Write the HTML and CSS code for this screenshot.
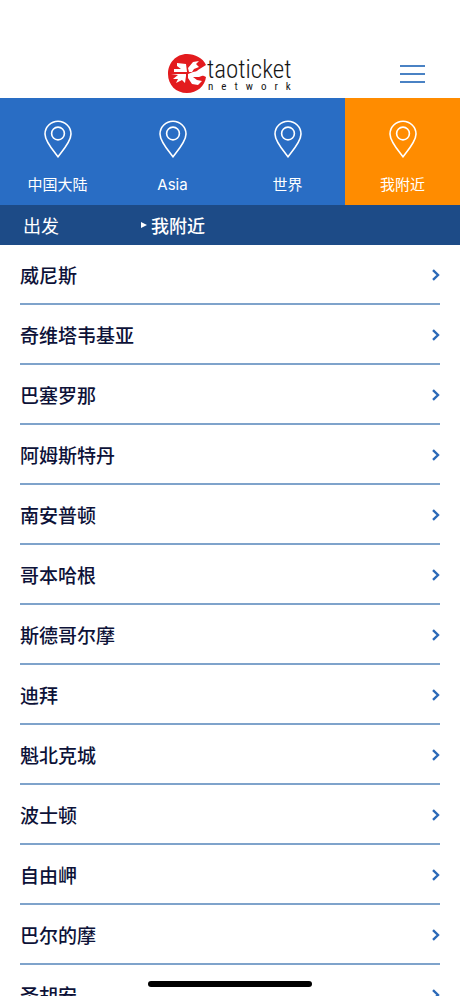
FILE: index.html
```html
<!DOCTYPE html>
<html lang="zh-CN">
<head>
    <meta charset="UTF-8">
    <meta name="viewport" content="width=device-width, initial-scale=1.0">
    <title>Taoticket Network</title>
    <link rel="stylesheet" href="styles.css">
</head>
<body>
    <svg class="sprite" width="0" height="0" aria-hidden="true">
        <symbol id="pin" viewBox="0 0 28 38">
            <path d="M14 36.8C9.5 31 1 21.500 1 14A13 12.800 0 0 1 27 14C27 21.500 18.500 31 14 36.800Z"/>
            <circle cx="14" cy="13.500" r="6.400"/>
        </symbol>
        <symbol id="chevron" viewBox="0 0 9 12">
            <path d="M2 1.200L7 6L2 10.800"/>
        </symbol>
    </svg>
    <header class="header">
        <a class="logo" href="#">
            <svg class="logo-mark" viewBox="0 0 39 39" aria-hidden="true">
                <path fill="#e31b1e" d="M19 0C27 0 35 4 38 11L30 16L28 18L38 23C37 32 29 39 19 39C8 39 0 31 0 20C0 9 8 0 19 0Z"/>
                <path fill="#fff" d="M9 9L18 10L19 18L6 18L6 15L13 15L9 12Z"/>
                <path fill="#fff" d="M21 18L20 14L25 8L31 7L28 10L31 13L26 15L24 18Z"/>
                <path fill="#fff" d="M3 20L18 20L18 22L17 29L14 26L8 29L10 25L5 25L10 21Z"/>
                <path fill="#fff" d="M20 20L25 18L30 17L39 20L31 23L25 23L29 26L34 27L30 31L24 30L20 24Z"/>
            </svg>
            <span class="logo-text">
                <span class="logo-name">taoticket</span>
                <span class="logo-sub">network</span>
            </span>
        </a>
        <button class="menu" type="button" aria-label="菜单">
            <span class="menu-line"></span>
            <span class="menu-line"></span>
            <span class="menu-line"></span>
        </button>
    </header>
    <nav class="tabs">
        <a class="tab" href="#"><svg class="pin"><use href="#pin"/></svg>中国大陆</a>
        <a class="tab" href="#"><svg class="pin"><use href="#pin"/></svg>Asia</a>
        <a class="tab" href="#"><svg class="pin"><use href="#pin"/></svg>世界</a>
        <a class="tab active" href="#"><svg class="pin"><use href="#pin"/></svg>我附近</a>
    </nav>
    <div class="crumbs">
        <span class="crumb">出发</span>
        <span class="crumb current"><svg class="arrow" viewBox="0 0 6 6" aria-hidden="true"><path d="M0 0L6 3L0 6Z"/></svg>我附近</span>
    </div>
    <main class="content">
        <ul class="ports">
            <li><a class="port" href="#">威尼斯<svg class="chevron"><use href="#chevron"/></svg></a></li>
            <li><a class="port" href="#">奇维塔韦基亚<svg class="chevron"><use href="#chevron"/></svg></a></li>
            <li><a class="port" href="#">巴塞罗那<svg class="chevron"><use href="#chevron"/></svg></a></li>
            <li><a class="port" href="#">阿姆斯特丹<svg class="chevron"><use href="#chevron"/></svg></a></li>
            <li><a class="port" href="#">南安普顿<svg class="chevron"><use href="#chevron"/></svg></a></li>
            <li><a class="port" href="#">哥本哈根<svg class="chevron"><use href="#chevron"/></svg></a></li>
            <li><a class="port" href="#">斯德哥尔摩<svg class="chevron"><use href="#chevron"/></svg></a></li>
            <li><a class="port" href="#">迪拜<svg class="chevron"><use href="#chevron"/></svg></a></li>
            <li><a class="port" href="#">魁北克城<svg class="chevron"><use href="#chevron"/></svg></a></li>
            <li><a class="port" href="#">波士顿<svg class="chevron"><use href="#chevron"/></svg></a></li>
            <li><a class="port" href="#">自由岬<svg class="chevron"><use href="#chevron"/></svg></a></li>
            <li><a class="port" href="#">巴尔的摩<svg class="chevron"><use href="#chevron"/></svg></a></li>
            <li><a class="port" href="#">圣胡安<svg class="chevron"><use href="#chevron"/></svg></a></li>
        </ul>
    </main>
    <div class="home-indicator"></div>
</body>
</html>
```
FILE: styles.css
```css
* {
    box-sizing: border-box;
}
body {
    margin: 0;
    height: 100vh;
    display: flex;
    flex-direction: column;
    overflow: hidden;
    background-color: #fff;
    font-family: Inter, "Noto Sans CJK SC", sans-serif;
}
a {
    color: inherit;
    text-decoration: none;
}
.sprite {
    position: absolute;
}

/* header */
.header {
    display: grid;
    grid-template-columns: 1fr auto 1fr;
    align-items: center;
    padding: 48px 32px 0;
    height: 98px;
    flex-shrink: 0;
}
.logo {
    grid-column: 2;
    display: flex;
    align-items: center;
    color: #161616;
    font-family: "Roboto Condensed", Roboto, sans-serif;
}
.logo-mark {
    width: 39px;
    height: 39px;
}
.logo-text {
    display: flex;
    flex-direction: column;
    width: 85px;
    padding-top: 4px;
}
.logo-name {
    font-size: 25px;
    font-weight: 300;
    line-height: 24px;
}
.logo-sub {
    padding-left: 1px;
    font-size: 11px;
    line-height: 10px;
    letter-spacing: 8px;
}
.menu {
    justify-self: end;
    display: flex;
    flex-direction: column;
    gap: 6px;
    padding: 5px 3px 3px;
    border: 0;
    background: none;
    cursor: pointer;
}
.menu-line {
    width: 25px;
    height: 2px;
    background-color: #4a82c4;
}

/* region tabs */
.tabs {
    display: grid;
    grid-template-columns: repeat(4, 1fr);
    flex-shrink: 0;
    background-color: #296dc4;
}
.tab {
    display: flex;
    flex-direction: column;
    align-items: center;
    gap: 16px;
    height: 107px;
    padding-top: 22px;
    color: #fff;
    font-size: 15px;
    line-height: 22px;
}
.tab.active {
    background-color: #ff8c00;
}
.pin {
    width: 28px;
    height: 38px;
    fill: none;
    stroke: #fff;
    stroke-width: 1.6;
}

/* departure bar */
.crumbs {
    display: flex;
    align-items: center;
    flex-shrink: 0;
    height: 40px;
    padding: 0 23px;
    background-color: #1d4b87;
    color: #fff;
    font-size: 18px;
}
.crumb {
    flex: 0 0 118px;
}
.current {
    display: flex;
    align-items: center;
    gap: 4px;
    font-weight: 500;
}
.arrow {
    width: 6px;
    height: 6px;
    fill: #fff;
}

/* port list */
.content {
    flex: 1;
    min-height: 0;
    overflow-y: auto;
    scrollbar-width: none;
}
.ports {
    margin: 0;
    padding: 0 20px;
    list-style: none;
}
.port {
    display: flex;
    align-items: center;
    justify-content: space-between;
    height: 60px;
    padding-top: 1px;
    border-bottom: 2px solid #7fa3cb;
    color: #0d1238;
    font-size: 19px;
    font-weight: 500;
}
.chevron {
    width: 9px;
    height: 12px;
    fill: none;
    stroke: #2b69b8;
    stroke-width: 2.4;
}
.home-indicator {
    position: fixed;
    bottom: 9px;
    left: 50%;
    width: 164px;
    height: 6px;
    margin-left: -82px;
    border-radius: 3px;
    background-color: #000;
}
```
